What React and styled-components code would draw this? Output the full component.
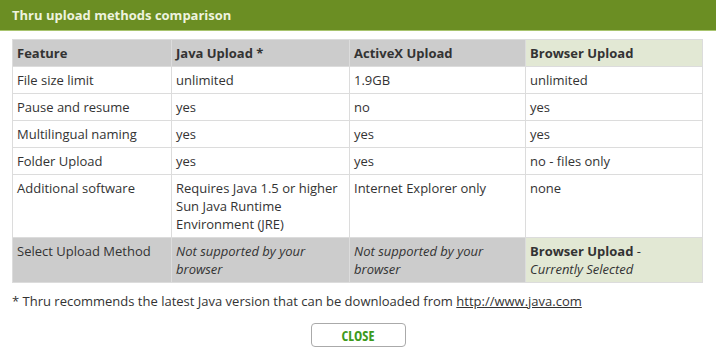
import React from "react";
import styled, { createGlobalStyle } from "styled-components";

const Global = createGlobalStyle`
  html, body { margin: 0; padding: 0; background: #fff; }
  body { font-family: "Open Sans", "Liberation Sans", sans-serif; color: #333; }
`;

const Dialog = styled.div`
  width: 716px;
  height: 360px;
  background: #fff;
  display: flex;
  flex-direction: column;
`;

const TitleBar = styled.div`
  height: 30px;
  background: #6b8e23;
  border-bottom: 1px solid #a8c46e;
  display: flex;
  align-items: center;
  padding: 0 12px;
  color: #eef3df;
  font-weight: 700;
  font-size: 13px;
`;

const Body = styled.div`
  padding: 8px 12px 0;
  display: flex;
  flex-direction: column;
`;

const Table = styled.table`
  width: 690px;
  border-collapse: collapse;
  table-layout: fixed;
  font-size: 13px;
  line-height: 18px;
`;

const Cell = styled.td`
  border: 1px solid #dcdcdc;
  padding: 4px 5px 4px 4px;
  vertical-align: top;
  text-align: left;
  background: ${(p) => (p.$tone === "gray" ? "#cccccc" : p.$tone === "green" ? "#e2e8d4" : "#fff")};
  font-weight: ${(p) => (p.$bold ? 700 : 400)};
  font-style: ${(p) => (p.$italic ? "italic" : "normal")};
  color: #333;
`;

const Footnote = styled.p`
  margin: 9px 0 0;
  font-family: "Open Sans", "Liberation Sans", sans-serif;
  font-size: 13px;
  color: #333;
  line-height: 18px;
  white-space: nowrap;
`;

const Link = styled.a`
  color: #333;
  text-decoration: underline;
`;

const ButtonRow = styled.div`
  display: flex;
  justify-content: center;
  margin-top: 13px;
`;

const Button = styled.button`
  width: 95px;
  height: 24px;
  border: 1px solid #aaa;
  border-radius: 4px;
  background: #fff;
  color: #3d9a1c;
  font-family: "Open Sans", "Liberation Sans Narrow", sans-serif;
  font-stretch: 80%;
  font-weight: 700;
  font-size: 14px;
  padding: 0;
`;

const rows = [
  ["File size limit", "unlimited", "1.9GB", "unlimited"],
  ["Pause and resume", "yes", "no", "yes"],
  ["Multilingual naming", "yes", "yes", "yes"],
  ["Folder Upload", "yes", "yes", "no - files only"],
  [
    "Additional software",
    <>
      Requires Java 1.5 or higher
      <br />
      Sun Java Runtime Environment (JRE)
    </>,
    "Internet Explorer only",
    "none",
  ],
];

export default function App() {
  return (
    <>
      <Global />
      <Dialog>
        <TitleBar>Thru upload methods comparison</TitleBar>
        <Body>
          <Table>
            <colgroup>
              <col style={{ width: 159 }} />
              <col style={{ width: 178 }} />
              <col style={{ width: 176 }} />
              <col style={{ width: 177 }} />
            </colgroup>
            <tbody>
              <tr>
                <Cell $tone="gray" $bold>Feature</Cell>
                <Cell $tone="gray" $bold>Java Upload *</Cell>
                <Cell $tone="gray" $bold>ActiveX Upload</Cell>
                <Cell $tone="green" $bold>Browser Upload</Cell>
              </tr>
              {rows.map((r, i) => (
                <tr key={i}>
                  {r.map((c, j) => (
                    <Cell key={j}>{c}</Cell>
                  ))}
                </tr>
              ))}
              <tr>
                <Cell $tone="gray">Select Upload Method</Cell>
                <Cell $tone="gray" $italic>Not supported by your browser</Cell>
                <Cell $tone="gray" $italic>Not supported by your browser</Cell>
                <Cell $tone="green">
                  <b>Browser Upload</b> - <i>Currently Selected</i>
                </Cell>
              </tr>
            </tbody>
          </Table>
          <Footnote>
            * Thru recommends the latest Java version that can be downloaded from{" "}
            <Link href="#">http://www.java.com</Link>
          </Footnote>
          <ButtonRow>
            <Button>CLOSE</Button>
          </ButtonRow>
        </Body>
      </Dialog>
    </>
  );
}
